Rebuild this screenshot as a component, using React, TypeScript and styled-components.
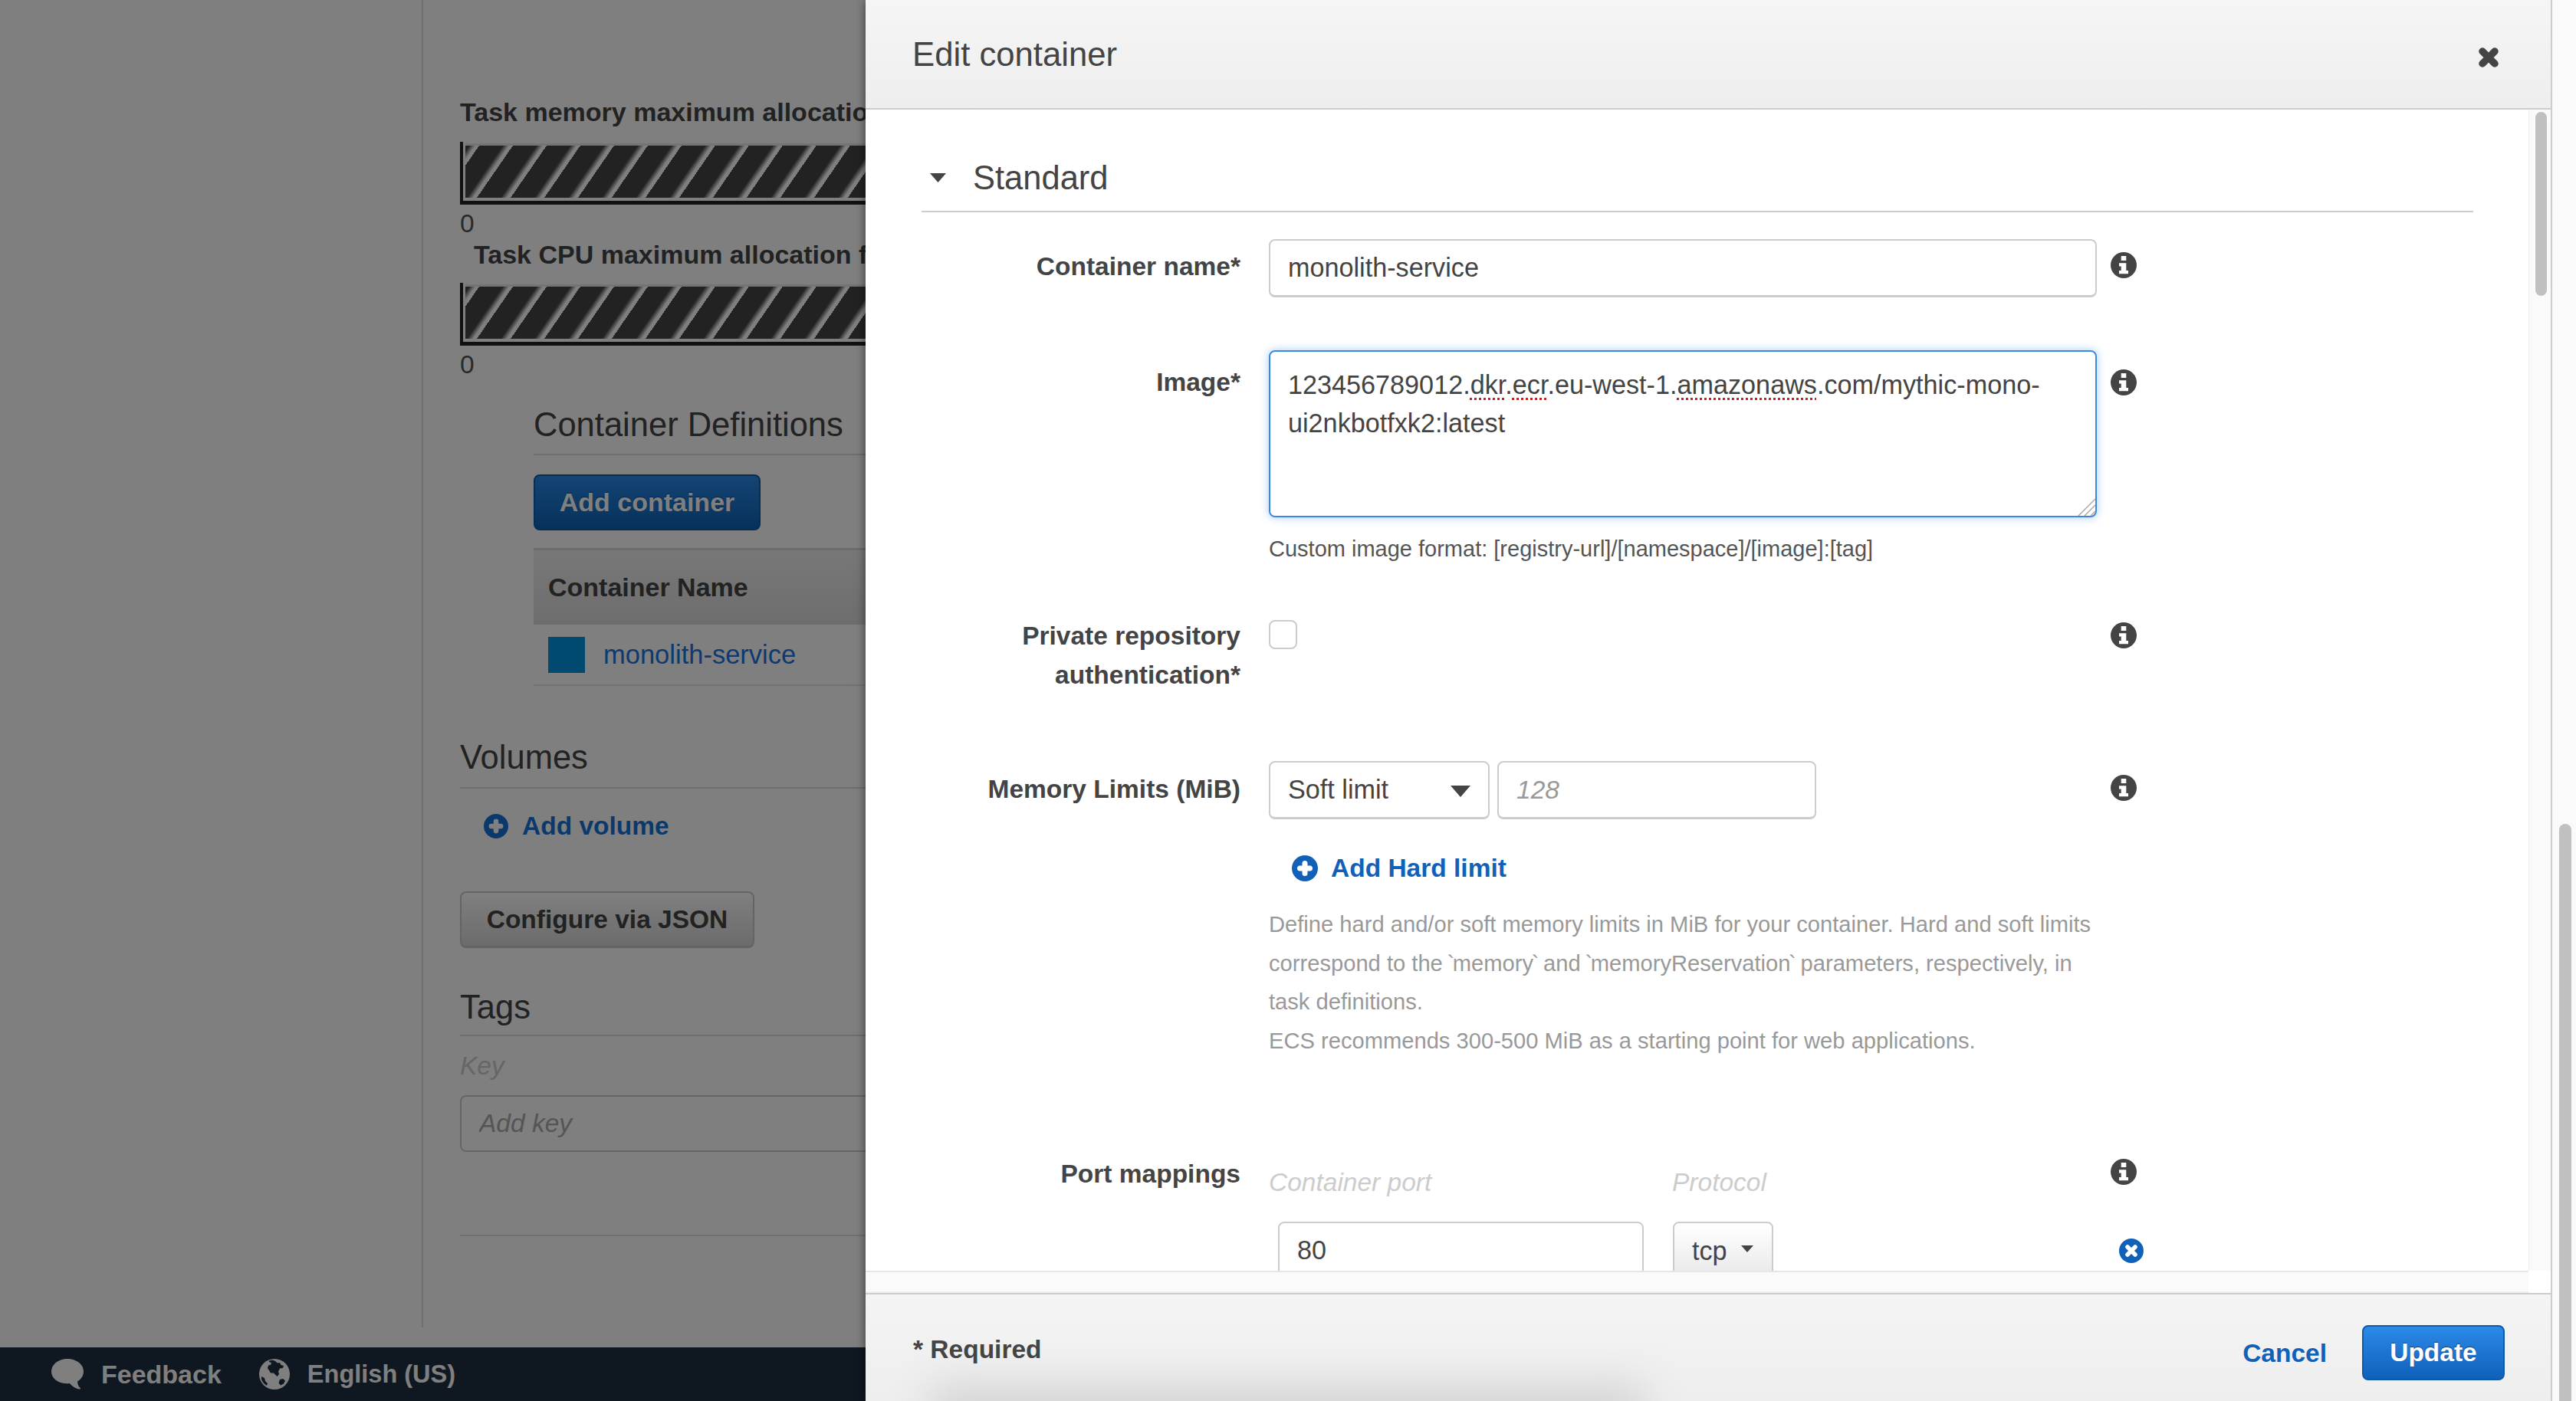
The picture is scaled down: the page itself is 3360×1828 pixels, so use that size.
import React from "react";
import styled, { createGlobalStyle } from "styled-components";

const Global = createGlobalStyle`
  html, body { margin: 0; padding: 0; width: 3360px; height: 1828px; overflow: hidden; background: #fff; }
  * { box-sizing: border-box; }
  body { font-family: "Liberation Sans", Arial, Helvetica, sans-serif; font-size: 33.5px; color: #444; }
`;

const Screen = styled.div`
  display: flex;
  width: 3360px;
  height: 1828px;
`;
const Viewport = styled.div`
  position: relative;
  flex: 1;
  overflow: hidden;
`;
const PageScrollbar = styled.div`
  width: 31px;
  background: #fafafa;
  display: flex;
  flex-direction: column;
  padding: 1075px 6px 0 9px;
`;
const PageThumb = styled.div`
  flex: 1;
  background: #c0c0c0;
  border-radius: 8px 8px 0 0;
`;

/* Background page */
const Page = styled.div`
  display: flex;
  flex-direction: column;
  height: 100%;
`;
const PageBody = styled.div`
  display: flex;
  height: 1732px;
  margin-bottom: 26px;
`;
const Sidebar = styled.aside`
  width: 552px;
  border-right: 2px solid #e0e0e0;
`;
const Content = styled.main`
  flex: 1;
  padding: 126px 0 0 48px;
  overflow: hidden;
`;
const TaskLabel = styled.div<{ $indent?: number }>`
  font-size: 34px;
  font-weight: 700;
  line-height: 40px;
  color: #444;
  margin-left: ${(p) => p.$indent ?? 0}px;
  white-space: nowrap;
`;
const HatchBar = styled.div<{ $top: number }>`
  height: 82px;
  margin-top: ${(p) => p.$top}px;
  border-left: 4px solid #222;
  border-bottom: 5px solid #222;
  padding: 5px 0 4px 3px;
  background: #fff;
`;
const HatchFill = styled.div`
  height: 100%;
  box-shadow: 0 -3px 0 #e8e8e8;
  background: repeating-linear-gradient(
    124.6deg,
    #444 0,
    #444 4px,
    #fff 11px,
    #fff 14.8px,
    #444 14.8px,
    #444 36.2px
  );
`;
const Zero = styled.div`
  line-height: 40px;
  margin-top: 5px;
  color: #555;
`;
const Heading = styled.h2<{ $top: number; $pad: number }>`
  margin: ${(p) => p.$top}px 0 0;
  padding-bottom: ${(p) => p.$pad}px;
  font-size: 43.5px;
  font-weight: 400;
  line-height: 50px;
  color: #444;
  border-bottom: 2px solid #ddd;
`;
const Definitions = styled.section`
  margin-left: 96px;
`;
const PrimaryPageButton = styled.div`
  display: flex;
  align-items: center;
  justify-content: center;
  width: 296px;
  height: 73px;
  margin-top: 25px;
  border: 2px solid #0d5aa8;
  border-radius: 8px;
  background: linear-gradient(#2a8ae8, #0c62b8);
  color: #fff;
  font-size: 34px;
  font-weight: 700;
  text-shadow: 0 -1px 1px #0a4a90;
`;
const TableHead = styled.div`
  display: flex;
  align-items: center;
  height: 100px;
  margin-top: 23px;
  padding-left: 19px;
  border-top: 3px solid #d8d8d8;
  background: linear-gradient(#f0f0f0, #dcdcdc);
  font-size: 34px;
  font-weight: 700;
  color: #444;
`;
const TableRow = styled.div`
  display: flex;
  align-items: center;
  gap: 24px;
  height: 80px;
  padding-left: 19px;
  border-bottom: 2px solid #e4e4e4;
`;
const Swatch = styled.div`
  width: 48px;
  height: 47px;
  background: #0094e0;
`;
const PageLink = styled.a`
  font-size: 34.5px;
  color: #1c74e0;
`;
const PageAdd = styled.div`
  display: flex;
  align-items: center;
  gap: 18px;
  height: 32px;
  margin: 33px 0 0 31px;
  font-weight: 700;
  color: #1873d8;
`;
const SecondaryButton = styled.div`
  display: flex;
  align-items: center;
  justify-content: center;
  width: 384px;
  height: 74px;
  margin-top: 69px;
  border: 2px solid #c8c8c8;
  border-bottom-width: 3px;
  border-radius: 8px;
  background: linear-gradient(#fff, #d8d8d8);
  font-weight: 700;
  color: #444;
`;
const FieldHint = styled.div`
  margin-top: 19px;
  line-height: 40px;
  font-style: italic;
  color: #ccc;
`;
const KeyInput = styled.input`
  display: block;
  width: 100%;
  height: 74px;
  margin-top: 18px;
  padding: 0 23px;
  border: 2px solid #ccc;
  border-radius: 8px;
  background: #fff;
  font: italic 33.5px "Liberation Sans", Arial, sans-serif;
  &::placeholder { color: #aaa; opacity: 1; }
`;
const Rule = styled.div`
  height: 2px;
  margin-top: 108px;
  background: #e0e0e0;
`;
const BottomBar = styled.footer`
  display: flex;
  align-items: center;
  height: 70px;
  padding-left: 67px;
  background: #1e2e40;
  color: #fff;
  font-weight: 700;
`;
const BarItem = styled.div<{ $left?: number; $size: number }>`
  display: flex;
  align-items: center;
  gap: 23px;
  margin-left: ${(p) => p.$left ?? 0}px;
  font-size: ${(p) => p.$size}px;
`;
const Dim = styled.div`
  position: absolute;
  inset: 0;
  background: rgba(0, 0, 0, 0.5);
`;

/* Modal */
const Modal = styled.div`
  position: absolute;
  top: 0;
  right: 0;
  bottom: 0;
  width: 2200px;
  display: flex;
  flex-direction: column;
  background: #fff;
  border-right: 2px solid #ccc;
  box-shadow: 0 0 12px rgba(0, 0, 0, 0.55);
`;
const ModalHeader = styled.header`
  flex: none;
  display: flex;
  align-items: center;
  justify-content: space-between;
  height: 143px;
  padding: 0 68px 0 61px;
  border-bottom: 2px solid #ccc;
  background: linear-gradient(#f5f5f5, #eeeeee);
`;
const ModalTitle = styled.h1`
  margin: 0;
  font-size: 43.7px;
  font-weight: 400;
  color: #444;
`;
const CloseIcon = styled.svg`
  margin-top: 9px;
`;
const ModalBody = styled.div`
  flex: 1;
  display: flex;
  min-height: 0;
`;
const ScrollColumn = styled.div`
  flex: 1;
  min-width: 0;
  display: flex;
  flex-direction: column;
`;
const ScrollArea = styled.div`
  flex: 1;
  min-height: 0;
  overflow: hidden;
  padding: 0 72px 0 73px;
`;
const HorizontalTrack = styled.div`
  flex: none;
  height: 29px;
  background: #fafafa;
  border-top: 2px solid #e6e6e6;
  border-bottom: 2px solid #f0f0f0;
`;
const VerticalTrack = styled.div`
  flex: none;
  width: 29px;
  margin-bottom: 29px;
  padding: 3px 5px 0 8px;
  background: #fafafa;
  border-left: 1px solid #eee;
`;
const VerticalThumb = styled.div`
  height: 240px;
  border-radius: 8px;
  background: #c0c0c0;
`;
const SectionHead = styled.div`
  display: flex;
  align-items: center;
  gap: 35px;
  margin-top: 64px;
  padding: 0 0 18px 11px;
  border-bottom: 2px solid #ccc;
  font-size: 43.5px;
  line-height: 50px;
  color: #444;
`;
const Row = styled.div<{ $top: number }>`
  display: grid;
  grid-template-columns: 507px 1080px 34px;
  column-gap: 19px;
  margin-top: ${(p) => p.$top}px;
  margin-left: -73px;
`;
const Label = styled.label<{ $top: number }>`
  padding: ${(p) => p.$top}px 18px 0 0;
  text-align: right;
  font-weight: 700;
  line-height: 51px;
  color: #444;
`;
const Info = styled.svg<{ $top: number }>`
  display: block;
  margin: ${(p) => p.$top}px 0 0 -1px;
`;
const Input = styled.input`
  display: block;
  width: 100%;
  height: 76px;
  padding: 0 23px;
  border: 2px solid #ccc;
  border-bottom-width: 3px;
  border-radius: 8px;
  background: #fff;
  color: #444;
  font: 34.2px "Liberation Sans", Arial, sans-serif;
  &::placeholder { color: #999; font-size: 33.5px; font-style: italic; opacity: 1; }
`;
const ImageBox = styled.div`
  position: relative;
  height: 218px;
  padding: 18px 23px;
  border: 2.5px solid #3b88e0;
  border-radius: 8px;
  box-shadow: 0 0 12px rgba(50, 140, 240, 0.45);
  font-size: 34.2px;
  line-height: 50px;
  color: #444;
  white-space: nowrap;
`;
const Misspelled = styled.span`
  text-decoration: underline dotted #ee1111 2.5px;
  text-underline-offset: 5px;
`;
const Grip = styled.svg`
  position: absolute;
  right: 0;
  bottom: 0;
`;
const Helper = styled.p`
  margin: 21px 0 0;
  font-size: 29px;
  line-height: 40px;
  color: #555;
`;
const Checkbox = styled.div`
  width: 37px;
  height: 38px;
  margin-top: 5px;
  border: 2px solid #ccc;
  border-radius: 8px;
`;
const LimitRow = styled.div`
  display: flex;
  gap: 10px;
`;
const SelectBox = styled.div`
  position: relative;
  display: flex;
  align-items: center;
  width: 288px;
  height: 76px;
  padding-left: 23px;
  border: 2px solid #ccc;
  border-bottom-width: 3px;
  border-radius: 8px;
  font-size: 34.2px;
  color: #444;
  &::after {
    content: "";
    position: absolute;
    right: 23px;
    top: 30px;
    border-style: solid;
    border-width: 15px 13.5px 0;
    border-color: #444 transparent transparent;
  }
`;
const LimitInput = styled(Input)`
  width: 416px;
`;
const AddLink = styled.div`
  display: flex;
  align-items: center;
  gap: 17px;
  height: 34px;
  margin: 47px 0 0 30px;
  font-weight: 700;
  color: #1261b8;
`;
const HelpText = styled.p`
  margin: 31px 0 0;
  font-size: 29.15px;
  line-height: 50.6px;
  color: #999;
  white-space: nowrap;
`;
const Tick = styled.span`
  margin: 0 -2.4px;
`;
const PortHead = styled.div`
  display: grid;
  grid-template-columns: 526px 1fr;
  padding-top: 17px;
  line-height: 40px;
  font-style: italic;
  color: #ccc;
`;
const PortRow = styled.div`
  display: flex;
  gap: 38px;
  padding-left: 12px;
`;
const PortInput = styled(Input)`
  width: 477px;
  flex: none;
`;
const ProtocolButton = styled.div`
  position: relative;
  display: flex;
  align-items: center;
  width: 131px;
  height: 76px;
  padding-left: 23px;
  border: 2px solid #ccc;
  border-radius: 8px;
  background: linear-gradient(#fff, #e8e8e8);
  font-size: 34.2px;
  color: #444;
  &::after {
    content: "";
    position: absolute;
    right: 24px;
    top: 29px;
    border-style: solid;
    border-width: 9px 8.5px 0;
    border-color: #444 transparent transparent;
  }
`;
const RemoveIcon = styled.svg`
  display: block;
  margin: 22px 0 0 10px;
`;
const ModalFooter = styled.footer`
  position: relative;
  flex: none;
  display: flex;
  align-items: center;
  height: 141px;
  padding: 12px 60px 0 62px;
  overflow: hidden;
  border-top: 2px solid #ccc;
  background: linear-gradient(#f4f4f4, #eeeeee);
`;
const FooterBlur = styled.div`
  position: absolute;
  left: 85px;
  bottom: -44px;
  width: 930px;
  height: 66px;
  background: #d4d4d4;
  filter: blur(26px);
`;
const Required = styled.div`
  position: relative;
  margin-top: -8px;
  font-weight: 700;
  color: #444;
`;
const Actions = styled.div`
  margin-left: auto;
  display: flex;
  align-items: center;
  gap: 46px;
`;
const CancelLink = styled.a`
  margin-top: 2px;
  font-weight: 700;
  color: #1261b8;
`;
const UpdateButton = styled.div`
  display: flex;
  align-items: center;
  justify-content: center;
  width: 186px;
  height: 72px;
  border: 2px solid #0d5aa8;
  border-radius: 8px;
  background: linear-gradient(#2c8ae8, #0f60ba);
  color: #fff;
  font-weight: 700;
  text-shadow: 0 -1px 1px #0a4a90;
`;

const InfoGlyph = ({ top }: { top: number }) => (
  <Info $top={top} width="34" height="34" viewBox="0 0 34 34">
    <circle cx="17" cy="17" r="17" fill="#444" />
    <path
      fill="#fff"
      d="M13.7 5h6.6v6h-6.6zM11 14.3h9.3V24H23v4.3H11V24h2.7v-5.5H11z"
    />
  </Info>
);

const PlusGlyph = ({ size, color }: { size: number; color: string }) => (
  <svg width={size} height={size} viewBox="0 0 34 34" style={{ flex: "none" }}>
    <circle cx="17" cy="17" r="17" fill={color} />
    <path
      fill="none"
      stroke="#fff"
      strokeWidth="7"
      strokeLinecap="round"
      d="M17 10.5v13M10.5 17h13"
    />
  </svg>
);

const Bubble = () => (
  <svg width="42" height="40" viewBox="0 0 42 40">
    <path
      fill="#fff"
      d="M21 0C9.5 0 0 7 0 16.5c0 6 4 11 10 13.7 4 1.700 9 2.300 14 1.800 2 2.500 6.500 7 13 7.500 .8 .1 1.500-.6 .8-1.400-2.500-2-3.500-4.500-3.700-8.500C39 26.500 42 21.800 42 16.500 42 7 32.500 0 21 0z"
    />
  </svg>
);

const Globe = () => (
  <svg width="40" height="40" viewBox="0 0 40 40">
    <circle cx="20" cy="20" r="20" fill="#fff" />
    <path
      fill="#1e2e40"
      d="M13 2.500c3-1.200 6-1 8 .5l3 2.500 3-.5 1.500 3 3.500 1-1 3-4 .5-2 4 1 3.500-2.500 3-1.500-1.500-3-3-4 0-2-3.500-2-2.500 1-4 3-.5 1-3-3-1zM27 27l4-1 3 2.500-2 4-4 2-2.500-3zM3 23l4 2 1 4 3 3-1 3-4-3-3-5z"
    />
  </svg>
);

export default function App() {
  return (
    <Screen>
      <Global />
      <Viewport>
        <Page>
          <PageBody>
            <Sidebar />
            <Content>
              <TaskLabel>Task memory maximum allocation for container memory reservation</TaskLabel>
              <HatchBar $top={19}>
                <HatchFill />
              </HatchBar>
              <Zero>0</Zero>
              <TaskLabel $indent={18}>Task CPU maximum allocation for containers</TaskLabel>
              <HatchBar $top={17}>
                <HatchFill />
              </HatchBar>
              <Zero>0</Zero>
              <Definitions>
                <Heading $top={33} $pad={13}>Container Definitions</Heading>
                <PrimaryPageButton>Add container</PrimaryPageButton>
                <TableHead>Container Name</TableHead>
                <TableRow>
                  <Swatch />
                  <PageLink>monolith-service</PageLink>
                </TableRow>
              </Definitions>
              <Heading $top={68} $pad={14}>Volumes</Heading>
              <PageAdd>
                <PlusGlyph size={32} color="#1873d8" />
                Add volume
              </PageAdd>
              <SecondaryButton>Configure via JSON</SecondaryButton>
              <Heading $top={52} $pad={11}>Tags</Heading>
              <FieldHint>Key</FieldHint>
              <KeyInput readOnly placeholder="Add key" />
              <Rule />
            </Content>
          </PageBody>
          <BottomBar>
            <BarItem $size={34}>
              <Bubble />
              Feedback
            </BarItem>
            <BarItem $left={49} $size={32.5}>
              <Globe />
              English (US)
            </BarItem>
          </BottomBar>
        </Page>
        <Dim />
        <Modal>
          <ModalHeader>
            <ModalTitle>Edit container</ModalTitle>
            <CloseIcon width="26" height="26" viewBox="0 0 26 26">
              <path stroke="#444" strokeWidth="9.5" strokeLinecap="round" d="M5 5l16 16M21 5L5 21" />
            </CloseIcon>
          </ModalHeader>
          <ModalBody>
            <ScrollColumn>
              <ScrollArea>
                <SectionHead>
                  <svg width="21" height="12" viewBox="0 0 21 12">
                    <path fill="#444" d="M0 0h21L10.500 12z" />
                  </svg>
                  Standard
                </SectionHead>
                <Row $top={35}>
                  <Label $top={10}>Container name*</Label>
                  <Input readOnly value="monolith-service" />
                  <InfoGlyph top={17} />
                </Row>
                <Row $top={69}>
                  <Label $top={16}>Image*</Label>
                  <div>
                    <ImageBox>
                      123456789012.<Misspelled>dkr</Misspelled>.<Misspelled>ecr</Misspelled>.eu-west-1.
                      <Misspelled>amazonaws</Misspelled>.com/mythic-mono-
                      <br />
                      ui2nkbotfxk2:latest
                      <Grip width="24" height="24" viewBox="0 0 24 24">
                        <path stroke="#aaa" strokeWidth="1.500" d="M2 24L24 2M10 24L24 10M18 24l6-6" />
                      </Grip>
                    </ImageBox>
                    <Helper>Custom image format: [registry-url]/[namespace]/[image]:[tag]</Helper>
                  </div>
                  <InfoGlyph top={25} />
                </Row>
                <Row $top={68}>
                  <Label $top={0}>
                    Private repository
                    <br />
                    authentication*
                  </Label>
                  <Checkbox />
                  <InfoGlyph top={8} />
                </Row>
                <Row $top={87}>
                  <Label $top={11}>Memory Limits (MiB)</Label>
                  <div>
                    <LimitRow>
                      <SelectBox>Soft limit</SelectBox>
                      <LimitInput readOnly placeholder="128" />
                    </LimitRow>
                    <AddLink>
                      <PlusGlyph size={34} color="#1261b8" />
                      Add Hard limit
                    </AddLink>
                    <HelpText>
                      Define hard and/or soft memory limits in MiB for your container. Hard and soft limits
                      <br />
                      correspond to the <Tick>`</Tick>memory<Tick>`</Tick> and <Tick>`</Tick>memoryReservation<Tick>`</Tick> parameters, respectively, in
                      <br />
                      task definitions.
                      <br />
                      ECS recommends 300-500 MiB as a starting point for web applications.
                    </HelpText>
                  </div>
                  <InfoGlyph top={18} />
                </Row>
                <Row $top={123}>
                  <Label $top={0}>Port mappings</Label>
                  <PortHead>
                    <span>Container port</span>
                    <span>Protocol</span>
                  </PortHead>
                  <InfoGlyph top={6} />
                </Row>
                <Row $top={31}>
                  <span />
                  <PortRow>
                    <PortInput readOnly value="80" />
                    <ProtocolButton>tcp</ProtocolButton>
                  </PortRow>
                  <RemoveIcon width="32" height="32" viewBox="0 0 32 32">
                    <circle cx="16" cy="16" r="16" fill="#1261b8" />
                    <path stroke="#fff" strokeWidth="5.500" strokeLinecap="round" d="M11 11l10 10M21 11L11 21" />
                  </RemoveIcon>
                </Row>
              </ScrollArea>
              <HorizontalTrack />
            </ScrollColumn>
            <VerticalTrack>
              <VerticalThumb />
            </VerticalTrack>
          </ModalBody>
          <ModalFooter>
            <FooterBlur />
            <Required>* Required</Required>
            <Actions>
              <CancelLink>Cancel</CancelLink>
              <UpdateButton>Update</UpdateButton>
            </Actions>
          </ModalFooter>
        </Modal>
      </Viewport>
      <PageScrollbar>
        <PageThumb />
      </PageScrollbar>
    </Screen>
  );
}
